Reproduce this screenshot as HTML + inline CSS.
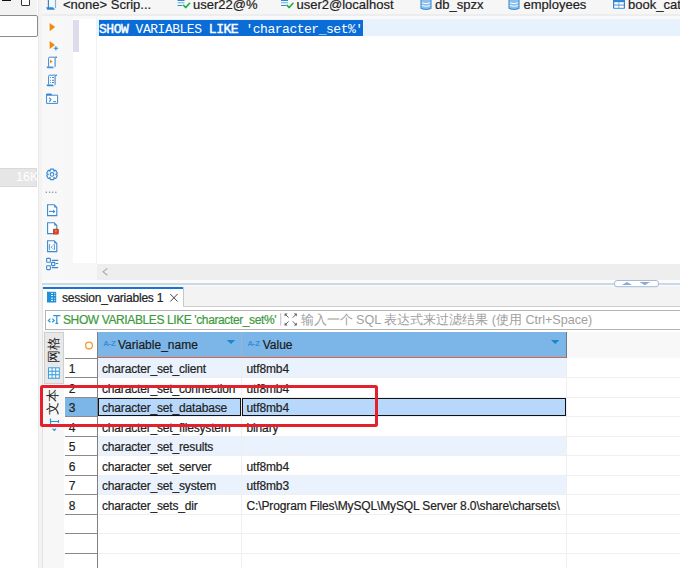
<!DOCTYPE html>
<html><head><meta charset="utf-8">
<style>
*{margin:0;padding:0;box-sizing:border-box}
html,body{width:680px;height:568px;overflow:hidden;background:#fff}
body{position:relative;font-family:"Liberation Sans",sans-serif;color:#222}
.a{position:absolute}
.t{position:absolute;white-space:pre;line-height:15px;-webkit-text-stroke:0.2px currentColor}
svg{position:absolute;overflow:visible}
</style></head><body>

<!-- ===== Left panel ===== -->
<div class="a" style="left:0;top:0;width:37px;height:15px;background:#f3f3f3"></div>
<div class="a" style="left:2px;top:0;width:9px;height:1px;background:#111"></div>
<div class="a" style="left:21px;top:-2px;width:8.5px;height:7.5px;border:1px solid #333;border-radius:1px;background:#fff"></div>
<div class="a" style="left:-3px;top:15.2px;width:40.6px;height:21.5px;border:1.5px solid #8c8c8c;border-radius:2px;background:#fff"></div>
<div class="a" style="left:-2px;top:168px;width:39px;height:18.5px;background:#e6e6e6;border:1px solid #d9d9d9"></div>
<div class="t" style="left:16px;top:170px;font-size:12.5px;color:#fff;-webkit-text-stroke:0">16K</div>
<div class="a" style="left:37.6px;top:0;width:1.6px;height:568px;background:#e9e9e9"></div>
<div class="a" style="left:39px;top:0;width:3.5px;height:568px;background:#f3f3f3"></div>

<!-- ===== Editor tab row ===== -->
<div class="a" style="left:42px;top:0;width:638px;height:14px;background:#f6f6f6"></div>
<div class="a" style="left:42px;top:14px;width:638px;height:1.5px;background:#ededed"></div>
<div class="a" style="left:42px;top:15.5px;width:638px;height:4px;background:#f9f9f9"></div>
<div class="t" style="left:63px;top:-3px;font-size:13px;color:#222">&lt;none&gt; Scrip...</div>
<div class="t" style="left:193px;top:-3px;font-size:13px;color:#222">user22@%</div>
<div class="t" style="left:296.5px;top:-3px;font-size:13px;color:#222">user2@localhost</div>
<div class="t" style="left:435px;top:-3px;font-size:13px;color:#222">db_spzx</div>
<div class="t" style="left:523.5px;top:-3px;font-size:13px;color:#222">employees</div>
<div class="t" style="left:628px;top:-3px;font-size:13px;color:#222">book_catalog</div>

<!-- ===== Editor body ===== -->
<div class="a" style="left:42px;top:16px;width:21px;height:266px;background:#f8f8f8"></div>
<div class="a" style="left:63px;top:16px;width:10px;height:266px;background:#f7f7f7"></div>
<div class="a" style="left:73px;top:19.3px;width:23px;height:244px;background:#fff"></div>
<div class="a" style="left:63px;top:263.3px;width:34px;height:17px;background:#f7f7f7"></div>
<div class="a" style="left:73px;top:20px;width:6px;height:32px;background:#dcdcec"></div>
<div class="a" style="left:96px;top:16px;width:1px;height:248px;background:#f2f2f2"></div>
<div class="a" style="left:97px;top:19.3px;width:583px;height:16.5px;background:#e8f2fe"></div>
<div class="a" style="left:99px;top:19.7px;width:263.7px;height:16.2px;background:#0a6cd6"></div>
<div class="t" style="left:99px;top:21.8px;font-family:'Liberation Mono',monospace;font-size:13px;letter-spacing:-0.48px;line-height:16px;color:#fff;-webkit-text-stroke:0"><b style="font-weight:normal;-webkit-text-stroke:0.45px #fff">SHOW</b> VARIABLES <b style="font-weight:normal;-webkit-text-stroke:0.45px #fff">LIKE</b> 'character_set%'</div>
<div class="a" style="left:97px;top:264px;width:583px;height:16px;background:#eeeeee"></div>

<!-- ===== Sash ===== -->
<div class="a" style="left:42px;top:280px;width:638px;height:7px;background:#fbfbfb"></div>
<div class="a" style="left:42px;top:282.8px;width:638px;height:1.8px;background:#cad8e8"></div>

<!-- ===== Results ===== -->
<div class="a" style="left:42px;top:286px;width:638px;height:20px;background:#f3f3f3"></div>
<div class="a" style="left:43px;top:287px;width:140.5px;height:20px;background:#fff;border-top:2px solid #1a74d4;border-right:1px solid #c8c8c8;border-top-right-radius:2px"></div>
<div class="t" style="left:62px;top:290.5px;font-size:12px;letter-spacing:-0.22px;color:#222">session_variables 1</div>
<div class="a" style="left:183px;top:306px;width:497px;height:1px;background:#cfcfcf"></div>
<div class="a" style="left:43px;top:307px;width:637px;height:3px;background:#fff"></div>
<div class="a" style="left:45px;top:310px;width:640px;height:19.5px;border:1px solid #b4b4b4;background:#fff"></div>
<div class="t" style="left:63px;top:312.5px;font-size:12px;letter-spacing:-0.39px;color:#3c9a3c">SHOW VARIABLES LIKE 'character_set%'</div>
<div class="t" style="left:300.5px;top:313.3px;font-size:12.6px;color:#a0a0a0;-webkit-text-stroke:0">输入一个 SQL 表达式来过滤结果 (使用 Ctrl+Space)</div>

<!-- grid area -->
<div class="a" style="left:42px;top:286px;width:1px;height:282px;background:#e2e2e2"></div>
<div class="a" style="left:43px;top:330px;width:21px;height:238px;background:#f7f7f7"></div>
<div class="a" style="left:44px;top:332px;width:20px;height:52px;background:#e8e8e8;border:1px solid #cfcfcf"></div>

<!-- header -->
<div class="a" style="left:97px;top:332px;width:469px;height:25.5px;background:#7cb6e8"></div>
<div class="a" style="left:97px;top:357px;width:469px;height:1.5px;background:#e0643a"></div>
<div class="a" style="left:241px;top:332px;width:1px;height:25px;background:#98b6d2"></div>
<div class="a" style="left:566px;top:332px;width:114px;height:26px;background:#f8f8f8"></div>
<div class="a" style="left:565.6px;top:332px;width:1.2px;height:26.3px;background:#6d7888"></div>
<div class="a" style="left:97px;top:332px;width:1px;height:236px;background:#808080"></div>
<div class="t" style="left:118px;top:338px;font-size:12px;color:#1a1a1a">Variable_name</div>
<div class="t" style="left:262.7px;top:338px;font-size:12px;color:#1a1a1a">Value</div>

<!-- rows -->
<div id="rows"></div>
<div class="a" style="left:98px;top:358.08px;width:468px;height:19.52px;background:#eaf3fd"></div>
<div class="a" style="left:65px;top:397.22px;width:32px;height:19.52px;background:#7cb6e8"></div>
<div class="a" style="left:98px;top:436.17px;width:468px;height:19.52px;background:#eaf3fd"></div>
<div class="a" style="left:98px;top:475.21px;width:468px;height:19.52px;background:#eaf3fd"></div>
<div class="a" style="left:65px;top:357.5px;width:32px;height:1px;background:#8a8a8a"></div>
<div class="a" style="left:65px;top:377.10px;width:32px;height:1px;background:#8a8a8a"></div>
<div class="a" style="left:98px;top:377.10px;width:582px;height:1px;background:#efefef"></div>
<div class="a" style="left:65px;top:396.62px;width:32px;height:1px;background:#8a8a8a"></div>
<div class="a" style="left:98px;top:396.62px;width:582px;height:1px;background:#efefef"></div>
<div class="a" style="left:65px;top:416.15px;width:32px;height:1px;background:#8a8a8a"></div>
<div class="a" style="left:98px;top:416.15px;width:582px;height:1px;background:#efefef"></div>
<div class="a" style="left:65px;top:435.67px;width:32px;height:1px;background:#8a8a8a"></div>
<div class="a" style="left:98px;top:435.67px;width:582px;height:1px;background:#efefef"></div>
<div class="a" style="left:65px;top:455.19px;width:32px;height:1px;background:#8a8a8a"></div>
<div class="a" style="left:98px;top:455.19px;width:582px;height:1px;background:#efefef"></div>
<div class="a" style="left:65px;top:474.71px;width:32px;height:1px;background:#8a8a8a"></div>
<div class="a" style="left:98px;top:474.71px;width:582px;height:1px;background:#efefef"></div>
<div class="a" style="left:65px;top:494.23px;width:32px;height:1px;background:#8a8a8a"></div>
<div class="a" style="left:98px;top:494.23px;width:582px;height:1px;background:#efefef"></div>
<div class="a" style="left:65px;top:513.76px;width:32px;height:1px;background:#8a8a8a"></div>
<div class="a" style="left:98px;top:513.76px;width:582px;height:1px;background:#efefef"></div>
<div class="a" style="left:65px;top:533.28px;width:32px;height:1px;background:#8a8a8a"></div>
<div class="a" style="left:98px;top:533.28px;width:582px;height:1px;background:#efefef"></div>
<div class="a" style="left:65px;top:552.80px;width:32px;height:1px;background:#8a8a8a"></div>
<div class="a" style="left:98px;top:552.80px;width:582px;height:1px;background:#efefef"></div>
<div class="a" style="left:65px;top:572.32px;width:32px;height:1px;background:#8a8a8a"></div>
<div class="a" style="left:98px;top:572.32px;width:582px;height:1px;background:#efefef"></div>
<div class="a" style="left:241px;top:358px;width:1px;height:210px;background:#efefef"></div>
<div class="a" style="left:566px;top:358px;width:1px;height:210px;background:#efefef"></div>
<div class="a" style="left:98.2px;top:397.5px;width:142.8px;height:18.5px;background:#b7d8fa;border:1.8px solid #111"></div>
<div class="a" style="left:242.2px;top:397.5px;width:323.8px;height:18.5px;background:#b7d8fa;border:1.8px solid #111"></div>
<div class="t" style="left:68.8px;top:362.00px;font-size:12px;color:#222">1</div>
<div class="t" style="left:102px;top:362.00px;font-size:12px;letter-spacing:-0.17px;color:#222">character_set_client</div>
<div class="t" style="left:246.5px;top:362.00px;font-size:12px;letter-spacing:-0.13px;color:#222">utf8mb4</div>
<div class="t" style="left:68.8px;top:381.52px;font-size:12px;color:#222">2</div>
<div class="t" style="left:102px;top:381.52px;font-size:12px;letter-spacing:-0.17px;color:#222">character_set_connection</div>
<div class="t" style="left:246.5px;top:381.52px;font-size:12px;letter-spacing:-0.13px;color:#222">utf8mb4</div>
<div class="t" style="left:68.8px;top:401.04px;font-size:12px;color:#222">3</div>
<div class="t" style="left:102px;top:401.04px;font-size:12px;letter-spacing:-0.17px;color:#222">character_set_database</div>
<div class="t" style="left:246.5px;top:401.04px;font-size:12px;letter-spacing:-0.13px;color:#222">utf8mb4</div>
<div class="t" style="left:68.8px;top:420.57px;font-size:12px;color:#222">4</div>
<div class="t" style="left:102px;top:420.57px;font-size:12px;letter-spacing:-0.17px;color:#222">character_set_filesystem</div>
<div class="t" style="left:246.5px;top:420.57px;font-size:12px;letter-spacing:-0.13px;color:#222">binary</div>
<div class="t" style="left:68.8px;top:440.09px;font-size:12px;color:#222">5</div>
<div class="t" style="left:102px;top:440.09px;font-size:12px;letter-spacing:-0.17px;color:#222">character_set_results</div>
<div class="t" style="left:246.5px;top:440.09px;font-size:12px;letter-spacing:-0.13px;color:#222"></div>
<div class="t" style="left:68.8px;top:459.61px;font-size:12px;color:#222">6</div>
<div class="t" style="left:102px;top:459.61px;font-size:12px;letter-spacing:-0.17px;color:#222">character_set_server</div>
<div class="t" style="left:246.5px;top:459.61px;font-size:12px;letter-spacing:-0.13px;color:#222">utf8mb4</div>
<div class="t" style="left:68.8px;top:479.13px;font-size:12px;color:#222">7</div>
<div class="t" style="left:102px;top:479.13px;font-size:12px;letter-spacing:-0.17px;color:#222">character_set_system</div>
<div class="t" style="left:246.5px;top:479.13px;font-size:12px;letter-spacing:-0.13px;color:#222">utf8mb3</div>
<div class="t" style="left:68.8px;top:498.65px;font-size:12px;color:#222">8</div>
<div class="t" style="left:102px;top:498.65px;font-size:12px;letter-spacing:-0.17px;color:#222">character_sets_dir</div>
<div class="t" style="left:246.5px;top:498.65px;font-size:12px;letter-spacing:-0.13px;color:#222">C:\Program Files\MySQL\MySQL Server 8.0\share\charsets\</div>
<!--/rows-->


<!-- ===== ICONS ===== -->
<!-- tab scroll icon -->
<svg class="a" style="left:0;top:0" width="680" height="568" viewBox="0 0 680 568">
 <!-- editor tab icons -->
 <g fill="none" stroke="#2f86d2" stroke-width="1.2">
  <path d="M48.4 -1 V8"/>
  <path d="M55.5 -1 V8.3" stroke="#7fb3e4"/>
 </g>
 <path d="M46.2 7.2 H53 L55 9.8 H47.2 Z" fill="#2f86d2"/>
 <!-- user22 icon -->
 <g stroke-width="1.1" stroke-linecap="round">
  <path d="M178 0.4 H184" stroke="#2a8ad4"/>
  <path d="M178 2.7 H184" stroke="#6db1e6"/>
  <path d="M178 5.5 H182" stroke="#2a8ad4"/>
 </g>
 <path d="M183.6 5.3 L185.6 7.6 L189.6 3.3" fill="none" stroke="#1fae47" stroke-width="1.6" stroke-linecap="round" stroke-linejoin="round"/>
 <g stroke-width="1.1" stroke-linecap="round">
  <path d="M281.5 0.4 H287.5" stroke="#2a8ad4"/>
  <path d="M281.5 2.7 H287.5" stroke="#6db1e6"/>
  <path d="M281.5 5.5 H285.5" stroke="#2a8ad4"/>
 </g>
 <path d="M287 5.3 L289 7.6 L293 3.3" fill="none" stroke="#1fae47" stroke-width="1.6" stroke-linecap="round" stroke-linejoin="round"/>
 <!-- db icons -->
 <g>
  <path d="M421 -2 V8.3 Q426 10.6 431 8.3 V-2 Z" fill="#8cc0ec" stroke="#3d8fd6" stroke-width="1.1"/>
  <path d="M421.8 2.8 Q426 4.6 430.2 2.8 M421.8 5.5 Q426 7.3 430.2 5.5" fill="none" stroke="#f4f9fe" stroke-width="1"/>
  <path d="M509 -2 V8.3 Q514 10.6 519 8.3 V-2 Z" fill="#8cc0ec" stroke="#3d8fd6" stroke-width="1.1"/>
  <path d="M509.8 2.8 Q514 4.6 518.2 2.8 M509.8 5.5 Q514 7.3 518.2 5.5" fill="none" stroke="#f4f9fe" stroke-width="1"/>
 </g>
 <!-- table icon -->
 <rect x="613" y="-3" width="12" height="11.8" rx="0.8" fill="#2f86d2"/>
 <rect x="614.2" y="2.2" width="4.4" height="2.4" fill="#fff"/>
 <rect x="619.2" y="2.2" width="4.6" height="2.4" fill="#fff"/>
 <rect x="614.2" y="5.5" width="4.4" height="2.3" fill="#fff"/>
 <rect x="619.2" y="5.5" width="4.6" height="2.3" fill="#fff"/>

 <!-- toolbar: run -->
 <path d="M49.6 23 L55.2 27 L49.6 31.2 Z" fill="#f08a0c"/>
 <path d="M49.6 40.9 L55 45 L49.6 48.9 Z" fill="#f08a0c"/>
 <path d="M53.8 48.3 H58.2 M55.9 46.2 V50.6" stroke="#3588d0" stroke-width="1.1"/>
 <!-- scroll with play -->
 <g transform="translate(44,54)">
  <path d="M4.6 12.6 V4.2 Q4.6 3.2 5.6 3.2 H13 Q12.2 3.4 11.2 4.2 V12.6" fill="#fff" stroke="#3a88d2" stroke-width="1"/>
  <path d="M11 4 V13.2" stroke="#8ab8e6" stroke-width="1.2"/>
  <path d="M2.4 12.5 H8.8 L10 14.3 H3.2 Z" fill="#4a92d6"/>
  <path d="M6 5.6 L8.6 7.6 L6 9.6 Z" fill="#f08a0c"/>
 </g>
 <g transform="translate(44,72)">
  <path d="M4.6 12.6 V4.2 Q4.6 3.2 5.6 3.2 H13 Q12.2 3.4 11.2 4.2 V12.6" fill="#fff" stroke="#3a88d2" stroke-width="1"/>
  <path d="M11 4 V13.2" stroke="#8ab8e6" stroke-width="1.2"/>
  <path d="M2.4 12.5 H8.8 L10 14.3 H3.2 Z" fill="#3a88d2"/>
  <path d="M6.2 5.6 H7 M8 5.6 H10 M6.2 8.3 H7 M8 8.3 H10 M6.2 10.5 H7 M8 10.5 H10" stroke="#3a88d2" stroke-width="1"/>
 </g>
 <!-- folder terminal -->
 <g transform="translate(44,90)">
  <path d="M2.6 4 H7.2 L8.2 5.2 H13.6 V13.4 H2.6 Z" fill="#fff" stroke="#3a88d2" stroke-width="1"/>
  <path d="M2.6 4 H7.2 L8.2 5.2 V5.8 H2.6 Z" fill="#3a88d2"/>
  <path d="M5.2 7.6 L7 9.6 L5.2 11.8" fill="none" stroke="#3a88d2" stroke-width="1.1"/>
  <path d="M9.2 11.6 H12" stroke="#3a88d2" stroke-width="1"/>
 </g>
 <!-- gear -->
 <g transform="translate(52,174.4)" fill="none" stroke="#3a88d2" stroke-width="1.1" stroke-linejoin="round">
  <path d="M-2.27 -3.17 L-1.63 -5.25 L1.63 -5.25 L2.27 -3.17 L1.62 -3.55 L3.74 -4.03 L5.36 -1.22 L3.88 0.38 L3.88 -0.38 L5.36 1.22 L3.74 4.03 L1.62 3.55 L2.27 3.17 L1.63 5.25 L-1.63 5.25 L-2.27 3.17 L-1.62 3.55 L-3.74 4.03 L-5.36 1.22 L-3.88 -0.38 L-3.88 0.38 L-5.36 -1.22 L-3.74 -4.03 L-1.62 -3.55 Z"/>
  <circle cx="0" cy="0" r="1.8"/>
 </g>
 <!-- dots -->
 <g fill="#8a8a80">
  <circle cx="46.3" cy="192.3" r="0.75"/><circle cx="49.6" cy="192.3" r="0.75"/>
  <circle cx="52.6" cy="192.3" r="0.75"/><circle cx="55.8" cy="192.3" r="0.75"/>
 </g>
 <!-- file arrow -->
 <g transform="translate(44,202)">
  <path d="M3.6 2.8 H10.2 L12.8 5.4 V13.6 H3.6 Z" fill="#fff" stroke="#3a88d2" stroke-width="1.1"/>
  <path d="M10.2 2.8 V5.4 H12.8 Z" fill="#3a88d2"/>
  <path d="M5 9.4 H10" stroke="#3a88d2" stroke-width="1.1"/>
  <path d="M9.2 7.4 L11.4 9.4 L9.2 11.4 Z" fill="#3a88d2"/>
 </g>
 <g transform="translate(44,220)">
  <path d="M3.6 2.8 H10.2 L12.8 5.4 V13.6 H3.6 Z" fill="#fff" stroke="#3a88d2" stroke-width="1.1"/>
  <path d="M10.2 2.8 V5.4 H12.8 Z" fill="#3a88d2"/>
  <rect x="9" y="8.8" width="5.8" height="5.8" rx="1" fill="#d2401c"/>
  <path d="M11.9 10 V11.8 M11.9 12.8 V13.4" stroke="#f3c6b8" stroke-width="0.9"/>
 </g>
 <g transform="translate(44,238)">
  <path d="M3.6 2.8 H10.2 L12.8 5.4 V13.6 H3.6 Z" fill="#fff" stroke="#3a88d2" stroke-width="1.1"/>
  <path d="M10.2 2.8 V5.4 H12.8 Z" fill="#3a88d2"/>
  <path d="M6.2 6.4 H5.4 V11.6 H6.2 M9.6 6.4 H10.4 V11.6 H9.6 M8.6 7.6 L7.2 9.2 L8.6 10.6" fill="none" stroke="#3a88d2" stroke-width="0.9"/>
 </g>
 <!-- list tree -->
 <g transform="translate(44,256)" fill="none" stroke="#3a88d2" stroke-width="1.1">
  <rect x="2.6" y="2.4" width="3.8" height="3.8" rx="0.8"/>
  <rect x="7.6" y="6.4" width="3.2" height="3.2" rx="0.6"/>
  <rect x="2.6" y="9.8" width="3.8" height="3.8" rx="0.8"/>
  <path d="M8.2 4.4 H13.8 M12 7.5 H13.8 M8.2 11.6 H13.8" stroke-linecap="round"/>
 </g>
 <!-- hscroll arrow -->
 <path d="M107.4 268.4 L103 271.8 L107.4 275.2" fill="none" stroke="#ababab" stroke-width="1.1"/>
 <!-- sash arrows -->
 <rect x="614.5" y="280.5" width="44" height="6.2" rx="2.5" fill="#fff" stroke="#a3badb" stroke-width="1"/>
 <path d="M622 285 L627 282 L632 285 Z" fill="#8eaad0"/>
 <path d="M639.5 282 H650 L644.8 285.2 Z" fill="#8eaad0"/>
 <!-- results tab icon -->
 <g transform="translate(44,288)">
  <path d="M3 3.8 H11.4 L12.2 4.6 V14.4 H3 Z" fill="#1f8fd8"/>
  <path d="M7 5.3 H9 M10.3 5.3 H11.2 M7 7.5 H9 M10.3 7.5 H11.2 M7 10.2 H9 M10.3 10.2 H11.2 M7 12.4 H9 M10.3 12.4 H11.2" stroke="#fff" stroke-width="0.9"/>
 </g>
 <!-- close x -->
 <path d="M170.3 294 L177.6 301.5 M177.6 294 L170.3 301.5" stroke="#444" stroke-width="1"/>
 <!-- filter T icon -->
 <g fill="none" stroke="#2a94d8" stroke-width="1.2">
  <path d="M50.4 318.6 L48.4 320.4 L50.4 322.2 M52.2 318.6 L54.2 320.4 L52.2 322.2"/>
  <path d="M53.2 315.6 H60.4 M56.8 315.6 V323.4 M55.4 323.4 H58.2"/>
 </g>
 <!-- filter separator + expand -->
 <path d="M280.7 313 V325.6" stroke="#c8c8c8" stroke-width="1.2"/>
 <g stroke="#5f5f5f" stroke-width="1" fill="#5f5f5f">
  <path d="M285.4 314.4 L288.6 317.6 M296 314.4 L292.8 317.6 M285.4 324.6 L288.6 321.4 M296 324.6 L292.8 321.4"/>
  <path d="M284.6 313.6 H287.6 L284.6 316.6 Z M296.8 313.6 H293.8 L296.8 316.6 Z M284.6 325.4 H287.6 L284.6 322.4 Z M296.8 325.4 H293.8 L296.8 322.4 Z" stroke="none"/>
 </g>
 <!-- header O circle -->
 <circle cx="89" cy="345.6" r="3.4" fill="none" stroke="#f29a34" stroke-width="1.3"/>
 <!-- A-Z icons -->
 <text x="103.2" y="345.7" font-family="Liberation Sans" font-weight="bold" font-size="8" letter-spacing="-0.3" fill="#3a8ed4">A-Z</text>
 <text x="247.4" y="345.7" font-family="Liberation Sans" font-weight="bold" font-size="8" letter-spacing="-0.3" fill="#3a8ed4">A-Z</text>
 <!-- dropdown triangles -->
 <path d="M226.8 340 H235.2 L231 344 Z" fill="#1a86cc"/>
 <path d="M551 340 H559.4 L555.2 344 Z" fill="#1a86cc"/>
 <!-- grid icon in side tab -->
 <g transform="translate(48,367.3)">
  <rect x="0" y="0" width="11.8" height="11.5" fill="#3a9ee0"/>
  <path d="M1 1.2 H10.8 M1 4.2 H10.8 M1 7.2 H10.8 M1 10.2 H10.8" stroke="none"/>
  <g fill="#fff">
   <rect x="1" y="1" width="2.6" height="2.4"/><rect x="4.6" y="1" width="2.6" height="2.4"/><rect x="8.2" y="1" width="2.6" height="2.4"/>
   <rect x="1" y="4.5" width="2.6" height="2.4"/><rect x="4.6" y="4.5" width="2.6" height="2.4"/><rect x="8.2" y="4.5" width="2.6" height="2.4"/>
   <rect x="1" y="8" width="2.6" height="2.4"/><rect x="4.6" y="8" width="2.6" height="2.4"/><rect x="8.2" y="8" width="2.6" height="2.4"/>
  </g>
 </g>
 <!-- text icon rotated in side strip -->
 <g fill="none" stroke="#2a94d8" stroke-width="1.2">
  <path d="M50.5 418.5 V424.5 M50.5 421.5 H58.5 M58.5 420 V423"/>
  <path d="M52.5 428.6 L54.3 430.4 L56.1 428.6"/>
 </g>
</svg>
<div class="t" style="left:46.5px;top:363px;font-size:12.5px;color:#222;transform:rotate(-90deg);transform-origin:0 0;line-height:14px;-webkit-text-stroke:0">网格</div>
<div class="t" style="left:46px;top:415px;font-size:12.5px;color:#222;transform:rotate(-90deg);transform-origin:0 0;line-height:14px;-webkit-text-stroke:0">文本</div>

<!-- red box -->
<div class="a" style="left:40.3px;top:384.6px;width:337.4px;height:42.8px;border:3.5px solid #e3202b;border-radius:2.5px"></div>

</body></html>
